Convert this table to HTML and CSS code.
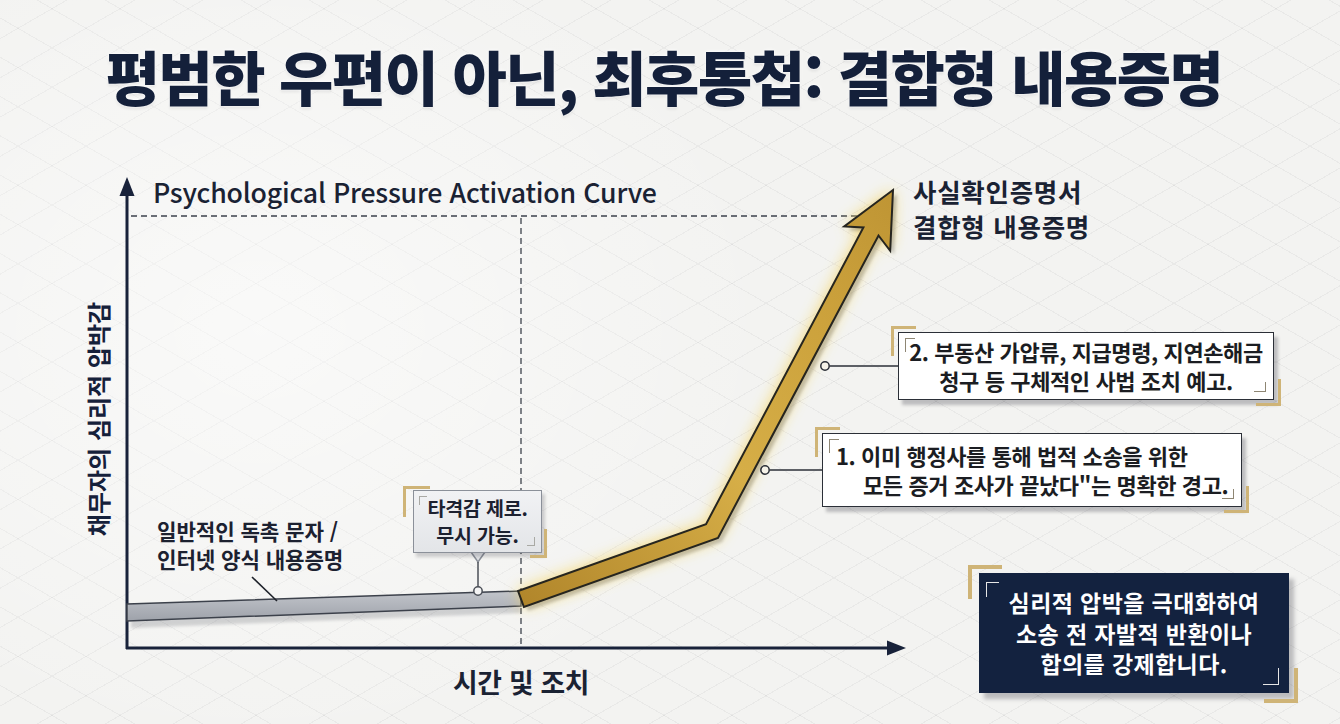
FILE: index.html
```html
<!DOCTYPE html>
<html lang="ko">
<head>
<meta charset="utf-8">
<title>결합형 내용증명</title>
<link rel="stylesheet" href="styles.css">
</head>
<body>
<main class="slide">
  <header class="slide-head">
    <h1 class="slide-title">평범한 우편이 아닌, 최후통첩: 결합형 내용증명</h1>
  </header>
  <section class="chart">
    <svg class="chart-canvas" viewBox="0 160 1340 564" width="1340" height="564" aria-hidden="true">
      <defs>
        <linearGradient id="gold" x1="0" y1="1" x2="1" y2="0">
          <stop offset="0" stop-color="#b0852a"/>
          <stop offset="0.45" stop-color="#d6ae47"/>
          <stop offset="0.75" stop-color="#cca23c"/>
          <stop offset="1" stop-color="#bf9534"/>
        </linearGradient>
        <linearGradient id="grey" x1="0" y1="0" x2="0" y2="1">
          <stop offset="0" stop-color="#c2c5cb"/>
          <stop offset="1" stop-color="#9ea2aa"/>
        </linearGradient>
        <filter id="glow" x="-30%" y="-30%" width="160%" height="160%">
          <feGaussianBlur stdDeviation="8"/>
        </filter>
        <filter id="soft" x="-10%" y="-50%" width="120%" height="200%">
          <feGaussianBlur stdDeviation="1.6"/>
        </filter>
      </defs>

      <path d="M131 216 H868 M521 218 V646" stroke="#3d424c" stroke-width="1.3" stroke-dasharray="6 4" fill="none"/>

      <path d="M127 649 V194" stroke="#18223a" stroke-width="3" fill="none"/>
      <polygon points="127,177 119.5,196 134.5,196" fill="#18223a"/>
      <path d="M126 648 H889" stroke="#18223a" stroke-width="3" fill="none"/>
      <polygon points="906,648 887,640.5 887,655.5" fill="#18223a"/>

      <polygon points="131,611 521,598 521,613 131,628" fill="#2a2f3a" opacity="0.18" filter="url(#soft)"/>
      <polygon points="127,604 521,591 521,606 127,621" fill="url(#grey)" stroke="#3c414b" stroke-width="1.5"/>

      <polygon points="518.1,591 706,524.1 863.4,227.5 844.2,226.4 893,190 890.2,250.8 878.5,235.5 718,537.9 523.9,607" fill="#f7d668" opacity="0.95" filter="url(#glow)"/>
      <polygon points="518.1,591 706,524.1 863.4,227.5 844.2,226.4 893,190 890.2,250.8 878.5,235.5 718,537.9 523.9,607" transform="translate(4 4)" fill="#3a3a3a" opacity="0.25" filter="url(#soft)"/>
      <polygon points="518.1,591 706,524.1 863.4,227.5 844.2,226.4 893,190 890.2,250.8 878.5,235.5 718,537.9 523.9,607" fill="url(#gold)" stroke="#26251f" stroke-width="2" stroke-linejoin="miter"/>

      <path d="M252 577 L277 601" stroke="#1e222a" stroke-width="1.6" fill="none"/>
      <path d="M471 552 L478 562 L485 552" stroke="#8b9099" stroke-width="1.5" fill="#e4e6e9"/>
      <path d="M478 562 V587" stroke="#4b4f57" stroke-width="1.5" fill="none"/>
      <circle cx="478" cy="591" r="4.2" fill="#f4f4f4" stroke="#4b4f57" stroke-width="1.5"/>

      <path d="M829.5 366 H899" stroke="#2b2f37" stroke-width="1.5" fill="none"/>
      <circle cx="825" cy="366" r="4.2" fill="#f6f3e8" stroke="#2b2f37" stroke-width="1.5"/>
      <path d="M769.5 470 H823" stroke="#2b2f37" stroke-width="1.5" fill="none"/>
      <circle cx="765" cy="470" r="4.2" fill="#f6f3e8" stroke="#2b2f37" stroke-width="1.5"/>
    </svg>

    <div class="ylabel">채무자의 심리적 압박감</div>
    <div class="curve-title">Psychological Pressure Activation Curve</div>
    <div class="end-label">
      <span class="line">사실확인증명서</span>
      <span class="line">결합형 내용증명</span>
    </div>

    <div class="left-label">
      <span class="line">일반적인 독촉 문자 /</span>
      <span class="line">인터넷 양식 내용증명</span>
    </div>

    <div class="tooltip">
      <span class="br br-tl"></span><span class="br br-br"></span>
      <span class="line">타격감 제로.</span>
      <span class="line">무시 가능.</span>
    </div>

    <div class="callout callout-2">
      <span class="br br-tl"></span><span class="br br-br"></span>
      <span class="line">2. 부동산 가압류, 지급명령, 지연손해금</span>
      <span class="line">청구 등 구체적인 사법 조치 예고.</span>
    </div>

    <div class="callout callout-1">
      <span class="br br-tl"></span><span class="br br-br"></span>
      <span class="line">1. 이미 행정사를 통해 법적 소송을 위한</span>
      <span class="line indent">모든 증거 조사가 끝났다"는 명확한 경고.</span>
    </div>

    <div class="xlabel">시간 및 조치</div>

    <div class="verdict">
      <span class="br br-tl"></span><span class="br br-br"></span>
      <span class="line">심리적 압박을 극대화하여</span>
      <span class="line">소송 전 자발적 반환이나</span>
      <span class="line">합의를 강제합니다.</span>
    </div>
  </section>
</main>
</body>
</html>
```

FILE: styles.css
```css
* { box-sizing: border-box; }

html, body {
  margin: 0;
  padding: 0;
}

body {
  width: 1340px;
  height: 724px;
  overflow: hidden;
  font-family: "Noto Sans CJK KR", "Noto Sans", sans-serif;
  color: #15203a;
}

.slide {
  width: 1340px;
  height: 724px;
  display: flex;
  flex-direction: column;
  background-color: #f3f3f1;
  background-image:
    radial-gradient(ellipse 520px 420px at 260px 330px, rgba(255,255,255,0.55), rgba(255,255,255,0) 100%),
    repeating-linear-gradient(30deg, rgba(0,0,0,0) 0 33px, rgba(60,60,70,0.055) 33px 34px),
    repeating-linear-gradient(150deg, rgba(0,0,0,0) 0 33px, rgba(60,60,70,0.055) 33px 34px);
}

.slide-head {
  height: 160px;
  flex: none;
  padding-top: 40px;
  padding-right: 12px;
}

.slide-title {
  margin: 0;
  text-align: center;
  font-size: 59px;
  line-height: 72px;
  font-weight: 900;
  letter-spacing: -1.5px;
  color: #14203a;
  text-shadow: 0 0 2px #fff, 0 0 4px #fff, 0 2px 3px rgba(0,0,0,0.12);
}

.chart {
  position: relative;
  flex: 1;
}

.chart-canvas {
  display: block;
}

.line { display: block; white-space: nowrap; }

.ylabel {
  position: absolute;
  left: 98px;
  top: 259px;
  transform: translate(-50%, -50%) rotate(-90deg);
  font-size: 24px;
  line-height: 30px;
  font-weight: 700;
  white-space: nowrap;
  color: #15203a;
}

.curve-title {
  position: absolute;
  left: 153px;
  top: 16px;
  font-size: 26.7px;
  line-height: 32px;
  font-weight: 500;
  letter-spacing: -0.2px;
  color: #1a2233;
  white-space: nowrap;
}

.end-label {
  position: absolute;
  left: 913px;
  top: 14px;
  font-size: 25.5px;
  line-height: 34.5px;
  font-weight: 700;
  letter-spacing: 0.7px;
  color: #1a2233;
}

.left-label {
  position: absolute;
  left: 157px;
  top: 357px;
  font-size: 21.2px;
  line-height: 28px;
  font-weight: 700;
  letter-spacing: -0.1px;
  color: #1c2130;
}

.xlabel {
  position: absolute;
  left: 453px;
  top: 505px;
  font-size: 26.8px;
  line-height: 34px;
  font-weight: 700;
  letter-spacing: -0.3px;
  color: #1a2233;
  white-space: nowrap;
}

/* boxes */
.tooltip,
.callout,
.verdict {
  position: absolute;
  display: flex;
  flex-direction: column;
  justify-content: center;
}

.tooltip::before,
.callout::before,
.verdict::before,
.tooltip::after,
.callout::after,
.verdict::after {
  content: "";
  position: absolute;
  border-color: #cfb477;
  border-style: solid;
  border-width: 0;
}

.tooltip::before,
.callout::before,
.verdict::before {
  left: -8px;
  top: -7px;
  width: 22px;
  height: 27px;
  border-top-width: 3.5px;
  border-left-width: 3.5px;
}

.tooltip::after,
.callout::after,
.verdict::after {
  right: -8px;
  bottom: -7px;
  width: 22px;
  height: 24px;
  border-right-width: 3.5px;
  border-bottom-width: 3.5px;
}

.br {
  position: absolute;
  width: 10px;
  height: 14px;
  border-style: solid;
  border-width: 0;
  border-color: #8e8673;
}

.br-tl {
  left: 6px;
  top: 5px;
  border-top-width: 1.5px;
  border-left-width: 1.5px;
}

.br-br {
  right: 7px;
  bottom: 7px;
  width: 12px;
  height: 10px;
  border-right-width: 1.5px;
  border-bottom-width: 1.5px;
}

.tooltip {
  left: 413px;
  top: 330px;
  width: 129px;
  height: 63px;
  background: linear-gradient(#f1f2f4, #e3e5e8);
  border: 1.5px solid #8b9099;
  box-shadow: 3px 4px 3px rgba(40,40,50,0.2);
  text-align: center;
  font-size: 19.5px;
  line-height: 26.5px;
  font-weight: 700;
  letter-spacing: -0.2px;
  color: #1c2130;
}

.tooltip .br { border-color: #a9a9a4; width: 8px; height: 9px; }
.tooltip .br-tl { left: 5px; top: 5px; }
.tooltip .br-br { right: 6px; bottom: 6px; }
.tooltip::before { left: -11px; top: -5px; width: 24px; height: 28px; }
.tooltip::after { right: -6px; bottom: -6px; width: 14px; height: 26px; }

.callout {
  background: #fff;
  border: 1.5px solid #2b2f37;
  box-shadow: 4px 5px 3px rgba(50,50,60,0.28);
  font-size: 22px;
  line-height: 29.5px;
  font-weight: 700;
  letter-spacing: -0.4px;
  color: #1b1d22;
}

.callout-2 {
  left: 898px;
  top: 172px;
  width: 376px;
  height: 68px;
  text-align: center;
}

.callout-1 {
  left: 822px;
  top: 273px;
  width: 420px;
  height: 74px;
  padding-left: 13px;
  text-align: left;
}

.callout-1 .indent { padding-left: 27px; }

.verdict {
  left: 979px;
  top: 413px;
  width: 310px;
  height: 120px;
  background: #13223f;
  box-shadow: 5px 6px 4px rgba(60,60,70,0.3);
  text-align: center;
  font-size: 23px;
  line-height: 30.8px;
  font-weight: 700;
  letter-spacing: 0.4px;
  color: #ffffff;
}

.verdict .br {
  border-color: #e6e6e6;
  width: 13px;
  height: 15px;
}

.verdict .br-tl { left: 7px; top: 9px; }
.verdict .br-br { right: 10px; bottom: 8px; width: 16px; height: 17px; }

.verdict::before { left: -11px; top: -8px; width: 30px; height: 30px; border-top-width: 4px; border-left-width: 4px; }
.verdict::after { right: -9px; bottom: -10px; width: 30px; height: 31px; border-right-width: 4px; border-bottom-width: 4px; }
```
